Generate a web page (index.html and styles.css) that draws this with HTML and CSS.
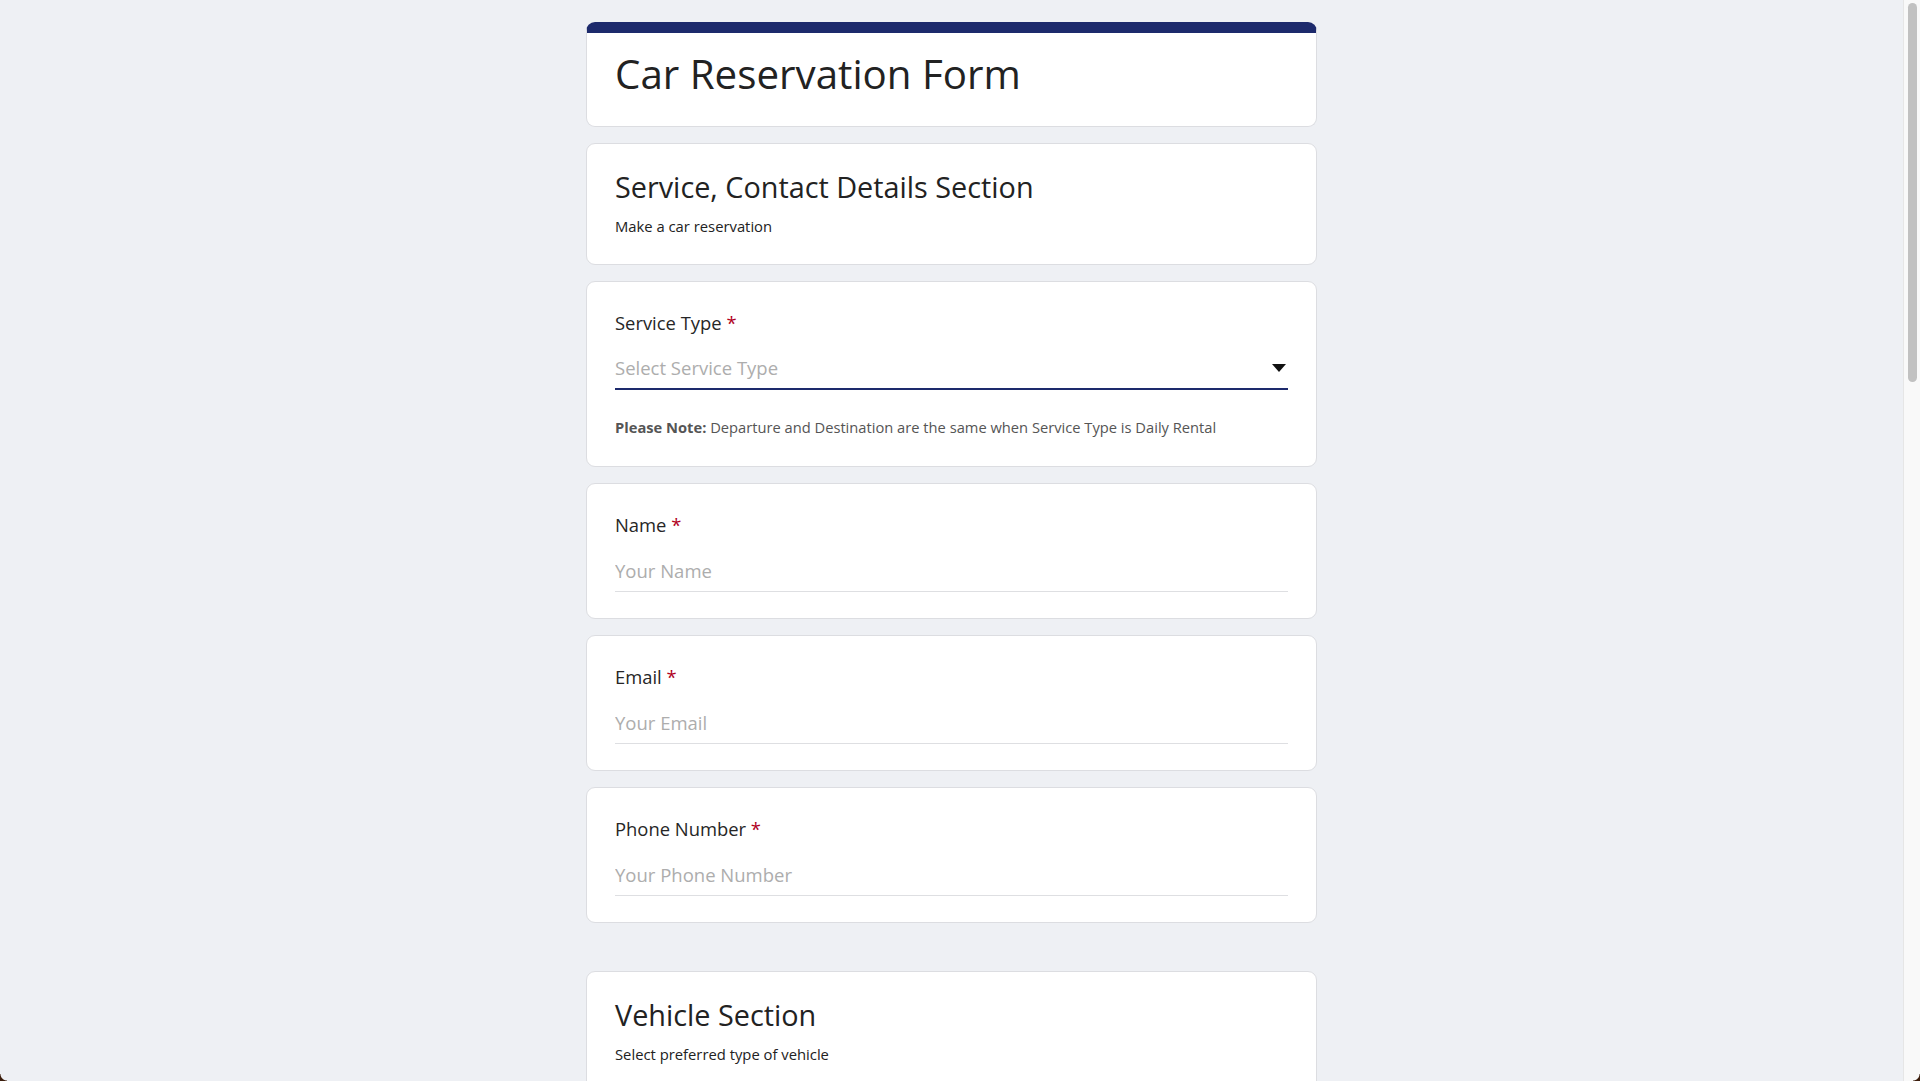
FILE: index.html
```html
<!DOCTYPE html>
<html lang="en">
<head>
<meta charset="utf-8">
<title>Car Reservation Form</title>
<link rel="stylesheet" href="styles.css">
</head>
<body>
<main class="form">
  <div class="group">
    <header class="card card-head">
      <h1 class="form-title">Car Reservation Form</h1>
    </header>

    <section class="card card-section">
      <h2 class="section-title">Service, Contact Details Section</h2>
      <p class="section-desc">Make a car reservation</p>
    </section>

    <div class="card card-field card-select">
      <label class="label">Service Type <span class="req">*</span></label>
      <div class="select">
        <span class="select-text">Select Service Type</span>
        <svg class="caret" width="14" height="8" viewBox="0 0 14 8"><path d="M0 0H14L7 8Z" fill="#111"/></svg>
      </div>
      <p class="note"><b>Please Note:</b> Departure and Destination are the same when Service Type is Daily Rental</p>
    </div>

    <div class="card card-field">
      <label class="label" for="name">Name <span class="req">*</span></label>
      <input class="input" id="name" type="text" placeholder="Your Name">
    </div>

    <div class="card card-field">
      <label class="label" for="email">Email <span class="req">*</span></label>
      <input class="input" id="email" type="email" placeholder="Your Email">
    </div>

    <div class="card card-field">
      <label class="label" for="phone">Phone Number <span class="req">*</span></label>
      <input class="input" id="phone" type="tel" placeholder="Your Phone Number">
    </div>
  </div>

  <div class="group">
    <section class="card card-section card-tall">
      <h2 class="section-title">Vehicle Section</h2>
      <p class="section-desc">Select preferred type of vehicle</p>
    </section>
  </div>
</main>

<div class="scrollbar" aria-hidden="true"><div class="scrollbar-thumb"></div></div>
<div class="corner corner-left" aria-hidden="true"></div>
<div class="corner corner-right" aria-hidden="true"></div>
</body>
</html>
```

FILE: styles.css
```css
html {
  background: #eef0f4;
}

body {
  margin: 0 17px 0 0;
  background: #eef0f4;
  font-family: "Open Sans", "Noto Sans", "Liberation Sans", sans-serif;
  color: #212121;
}

.form {
  width: 731px;
  margin: 0 auto;
  padding: 22px 0 0;
  display: flex;
  flex-direction: column;
  gap: 48px;
}

.group {
  display: flex;
  flex-direction: column;
  gap: 16px;
}

.card {
  background: #fff;
  border: 1px solid #dcdde1;
  border-radius: 9px;
  padding: 0 28px;
  box-sizing: border-box;
}

.card-head {
  border-top: 11px solid #1d2a6c;
  padding-top: 15px;
  padding-bottom: 26px;
}

.form-title {
  margin: 0;
  font-size: 40.3px;
  line-height: 52px;
  font-weight: 400;
  color: #222;
}

.card-section {
  padding-top: 25px;
  padding-bottom: 27px;
}

.card-tall {
  padding-bottom: 60px;
}

.section-title {
  margin: 0;
  font-size: 28.8px;
  line-height: 36px;
  font-weight: 400;
  color: #222;
}

.section-desc {
  margin: 10px 0 0;
  font-size: 14.8px;
  line-height: 22px;
  color: #222;
}

.card-field {
  padding-top: 28px;
  padding-bottom: 26px;
  display: flex;
  flex-direction: column;
}

.card-select {
  padding-bottom: 28px;
}

.label {
  display: block;
  font-size: 18.4px;
  line-height: 26px;
  color: #262626;
}

.req {
  color: #b0001e;
}

.input {
  display: block;
  width: 100%;
  box-sizing: border-box;
  margin: 20px 0 0;
  padding: 0 0 9px;
  border: 0;
  border-bottom: 1px solid #dedfe2;
  outline: none;
  background: transparent;
  font-family: inherit;
  font-size: 18.5px;
  line-height: 24px;
  height: 34px;
  color: #222;
}

.input::placeholder {
  color: #adadad;
}

.select {
  display: flex;
  align-items: center;
  justify-content: space-between;
  margin-top: 20px;
  padding: 0 2px 8px 0;
  border-bottom: 2px solid #1d2a6c;
}

.select-text {
  font-size: 18.5px;
  line-height: 24px;
  color: #adadad;
}

.caret {
  display: block;
}

.note {
  margin: 26px 0 0;
  font-size: 14.7px;
  line-height: 22px;
  color: #555;
}

.note b {
  font-weight: 700;
}

.scrollbar {
  position: fixed;
  top: 0;
  right: 0;
  width: 17px;
  height: 100vh;
  box-sizing: border-box;
  background: #f9f9f9;
  border-left: 1px solid #e6e6e6;
  padding: 3px 3px 0 4px;
}

.scrollbar-thumb {
  width: 9px;
  height: 379px;
  border-radius: 5px;
  background: #c1c1c1;
}

.corner {
  position: fixed;
  bottom: 0;
  width: 7px;
  height: 7px;
}

.corner-right {
  right: 0;
  background: radial-gradient(circle at 0 0, transparent 6px, #3b1d0c 7px);
}

.corner-left {
  left: 0;
  background: radial-gradient(circle at 100% 0, transparent 6px, #3b1d0c 7px);
}
```
